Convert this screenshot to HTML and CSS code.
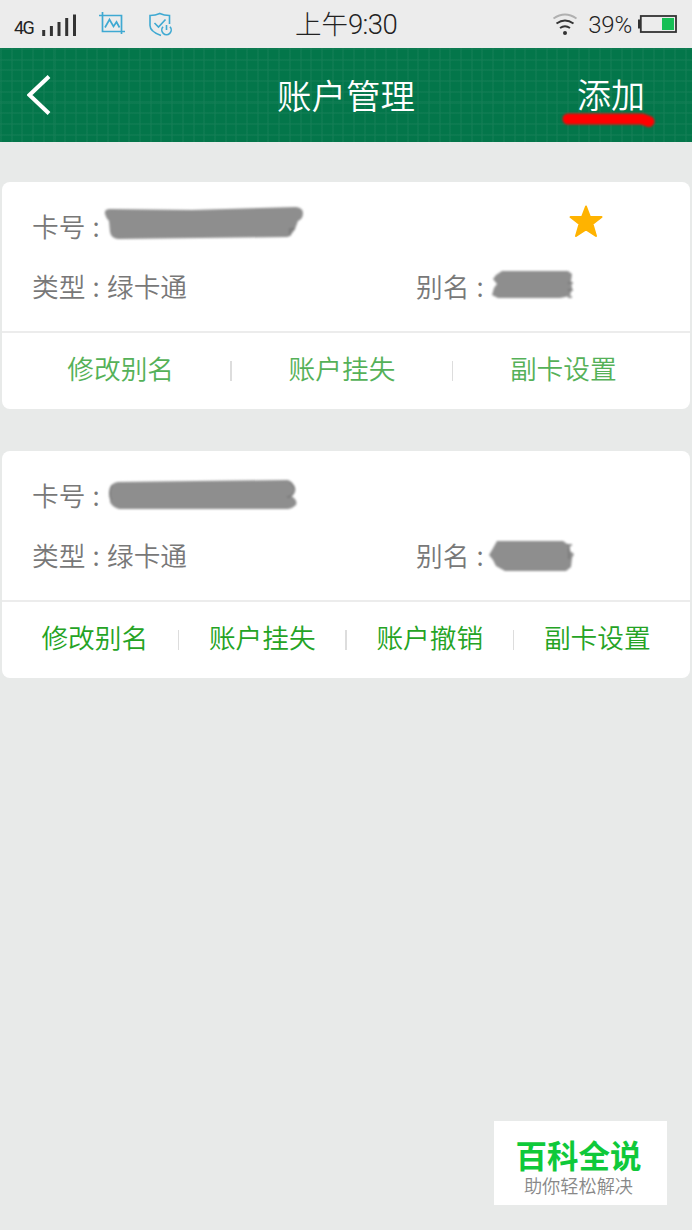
FILE: index.html
```
<!DOCTYPE html>
<html lang="zh-CN">
<head>
  <meta charset="UTF-8" />
  <meta name="viewport" content="width=device-width, initial-scale=1" />
  <title>账户管理</title>
  <link rel="stylesheet" href="styles.css">
</head>
<body>
  <div class="status-bar">
    <div class="status-left">
      <span class="network">4G</span>
      <svg class="signal" width="36" height="22" viewBox="0 0 36 22">
        <path d="M1.7 16v6M9.4 12v10M17 8v14M24.7 4v18M32.5 0.500v21.500" stroke="#333" stroke-width="3" />
      </svg>
      <svg class="crop" width="27" height="24" viewBox="0 0 27 24" fill="none" stroke="#3fa9d2" stroke-width="1.7">
        <path d="M0 3.500h22.500V22M3.500 0v19.500H26M6 15.500l4.500-8 4 7 3-4.500 3 5.500" />
      </svg>
      <svg class="shield" width="24" height="26" viewBox="0 0 24 26" fill="none" stroke="#3fa9d2" stroke-width="1.6">
        <path d="M20.500 12V3.500Q15 3.500 10.800 1.500 6.500 3.500 1 3.500v10q0 6 11 10M5.500 11l4 4 7-7.500" />
        <path d="M14 14.800a4.700 4.700 0 1 0 7 0M17.500 13v5" />
      </svg>
    </div>
    <div class="time">上午<span>9:30</span></div>
    <div class="status-right">
      <svg class="wifi" width="26" height="23" viewBox="0 0 26 23" fill="none" stroke="#333" stroke-width="1.8">
        <path d="M1.500 5.500q11.500-8 23 0" stroke="#b0b0b0" />
        <path d="M4.500 10.500q8.500-6 17 0M8 15q5-3.500 10 0" />
        <circle cx="13" cy="20" r="2" fill="#333" stroke="none" />
      </svg>
      <span class="percent">39%</span>
      <svg class="battery" width="39" height="18" viewBox="0 0 39 18">
        <rect x="0" y="4.500" width="3" height="9" fill="#333" />
        <rect x="2.800" y="1" width="35.200" height="16" fill="none" stroke="#333" stroke-width="1.800" />
        <rect x="24" y="3" width="12" height="12" fill="#16bf55" />
      </svg>
    </div>
  </div>

  <header class="header">
    <svg class="back" width="24" height="40" viewBox="0 0 24 40">
      <path d="M22 1.500L2.500 20 22 38.500" fill="none" stroke="#fff" stroke-width="4" />
    </svg>
    <h1>账户管理</h1>
    <div class="add">添加
      <svg class="underline" width="100" height="20" viewBox="0 0 100 20">
        <path d="M8 9H82L89 11.500" />
      </svg>
    </div>
  </header>

  <main>
    <section class="card">
      <div class="info">
        <div class="field wide">
          <span class="label">卡号<i>:</i></span>
          <svg class="mask" width="210" height="44" viewBox="0 0 210 44">
            <path d="M1 9Q0 4 6 4L88 5 192 2Q199 3 199 8 199 14 194 16L191 24Q189 28 186 30L184 32 14 34Q7 33 6 27L5 16Q2 13 1 9Z" />
            <path class="trace" d="M186 31v-7h5" />
          </svg>
        </div>
        <div class="favorite">
          <svg width="34" height="33" viewBox="0 0 34 33">
            <path d="M17 1.500L21 12H32.500L23.500 19 27 31 17 24.500 7 31 10.500 19 1.500 12H13Z" fill="#ffb300" stroke="#ffb300" stroke-width="2" stroke-linejoin="round" />
          </svg>
        </div>
        <div class="field"><span class="label">类型<i>:</i></span>绿卡通</div>
        <div class="field">
          <span class="label">别名<i>:</i></span>
          <svg class="mask" width="100" height="44" viewBox="0 0 100 44">
            <path d="M8 10L14 6H80L84 9 83 16 84 23 82 31 72 33H10L4 30 6 23 9 19 5 14Z" />
            <path class="trace" d="M80 18h5M80 25h5M80 32h4" />
          </svg>
        </div>
      </div>
      <div class="actions three">
        <a>修改别名</a>
        <a>账户挂失</a>
        <a>副卡设置</a>
      </div>
    </section>

    <section class="card">
      <div class="info">
        <div class="field wide">
          <span class="label">卡号<i>:</i></span>
          <svg class="mask" width="210" height="44" viewBox="0 0 210 44">
            <path d="M14 8L92 7 184 6Q189 8 190 14 190 19 187 22 194 26 192 31 189 34 184 35L15 35Q8 33 6 28L6 15Q7 9 14 8Z" />
            <path class="trace" d="M8 11Q4 18 7 26M186 8Q192 13 190 18T183 23" />
          </svg>
        </div>
        <div class="field"><span class="label">类型<i>:</i></span>绿卡通</div>
        <div class="field">
          <span class="label">别名<i>:</i></span>
          <svg class="mask" width="100" height="44" viewBox="0 0 100 44">
            <path d="M9 7H75L82 12 82 17 86 20 84 24 83 33 78 37H17L8 32 5 26 1 21 4 16Z" />
            <path class="trace" d="M79 11h5M81 14v11" />
          </svg>
        </div>
      </div>
      <div class="actions four">
        <a>修改别名</a>
        <a>账户挂失</a>
        <a>账户撤销</a>
        <a>副卡设置</a>
      </div>
    </section>
  </main>

  <aside class="watermark">
    <strong>百科全说</strong>
    <span>助你轻松解决</span>
  </aside>
</body>
</html>
```
FILE: styles.css
```
* {
  box-sizing: border-box;
}
body {
  margin: 0;
  height: 1230px;
  position: relative;
  background: #e8eae9;
  font-family: "Noto Sans CJK SC", sans-serif;
  font-weight: 350;
  color: #787878;
  overflow: hidden;
}
svg {
  display: block;
  flex: none;
}
.status-bar {
  display: grid;
  grid-template-columns: 1fr auto 1fr;
  height: 48px;
  background: #ececec;
  color: #222;
}
.status-left,
.status-right {
  display: flex;
  align-items: center;
}
.status-left {
  padding-left: 14px;
}
.network {
  width: 28px;
  font: 18px/24px Roboto, sans-serif;
  letter-spacing: -1.5px;
  padding-top: 8px;
}
.signal {
  margin-top: 1px;
}
.crop {
  margin-left: 21px;
}
.shield {
  margin-left: 23px;
  margin-top: 1px;
}
.time {
  font-size: 26.5px;
  line-height: 46px;
  font-weight: 300;
}
.time span {
  font-family: Roboto, sans-serif;
  font-size: 27.5px;
  letter-spacing: -0.6px;
}
.status-right {
  justify-content: flex-end;
  padding-right: 15px;
}
.percent {
  margin: 2px 6px 0 9px;
  font: 300 24px/40px Roboto, sans-serif;
  letter-spacing: -0.2px;
}
.wifi {
  margin-right: 1px;
}
.header {
  display: grid;
  grid-template-columns: 1fr auto 1fr;
  align-items: center;
  height: 94px;
  padding: 0 47px 0 26px;
  color: #fff;
  background-color: #03764a;
  background-image:
    repeating-linear-gradient(90deg, #167f5780 0 2px, transparent 2px 10.7px),
    repeating-linear-gradient(#167f5780 0 2px, transparent 2px 10.7px);
}
.back {
  margin: -1px 0 0 1px;
}
h1 {
  margin: 0 -21px 0 0;
  font-size: 34.5px;
  line-height: 90px;
  font-weight: 350;
}
h1,
.add {
  padding-bottom: 3px;
}
.add {
  position: relative;
  justify-self: end;
  font-size: 34px;
  line-height: 90px;
}
.underline {
  position: absolute;
  left: -17px;
  top: 61px;
  fill: none;
  stroke: #f00;
  stroke-width: 11px;
  stroke-linecap: round;
  stroke-linejoin: round;
  filter: blur(1px);
}
main {
  display: flex;
  flex-direction: column;
  gap: 42px;
  padding: 40px 2px 0;
}
.card {
  height: 227px;
  background: #fff;
  border-radius: 8px;
}
.info {
  display: grid;
  grid-template-columns: 384px 1fr;
  grid-template-rows: 60px 60px;
  height: 151px;
  padding: 13px 0 0 30px;
  border-bottom: 2px solid #ececec;
}
.field {
  display: flex;
  align-items: center;
  font-size: 26.7px;
}
.info .wide:nth-last-child(3) {
  grid-column: 1 / -1;
}
.label {
  display: flex;
  width: 75px;
}
.label i {
  font-style: normal;
  margin-left: 7px;
}
.mask {
  margin: 4px 0 0 -3px;
  fill: #8e8e8e;
  filter: blur(1.2px);
}
.trace {
  fill: none;
  stroke: #777;
  stroke-width: 1.5px;
}
.favorite {
  display: flex;
  align-items: center;
  padding: 0 0 7px 153px;
}
.actions {
  display: grid;
  height: 76px;
  font-size: 26.7px;
}
.actions a {
  display: flex;
  align-items: center;
  justify-content: center;
  position: relative;
  padding-bottom: 8px;
}
.actions a + a::before {
  content: "";
  position: absolute;
  left: -1px;
  top: 28px;
  width: 1.5px;
  height: 20px;
  background: #ddd;
}
.three {
  grid-template-columns: repeat(3, 1fr);
  padding: 0 16px 0 8px;
  color: #55b158;
}
.four {
  grid-template-columns: repeat(4, 1fr);
  padding: 0 9px;
  color: #24a324;
}
.watermark {
  position: absolute;
  left: 494px;
  top: 1121px;
  display: flex;
  flex-direction: column;
  align-items: center;
  width: 173px;
  height: 84px;
  padding: 10px 4px 0 0;
  background: #fff;
}
.watermark strong {
  font-size: 31.5px;
  line-height: 47px;
  font-weight: 700;
  color: #0fc93a;
}
.watermark span {
  font-size: 18.2px;
  line-height: 14px;
  font-weight: 350;
  color: #888;
}
```
